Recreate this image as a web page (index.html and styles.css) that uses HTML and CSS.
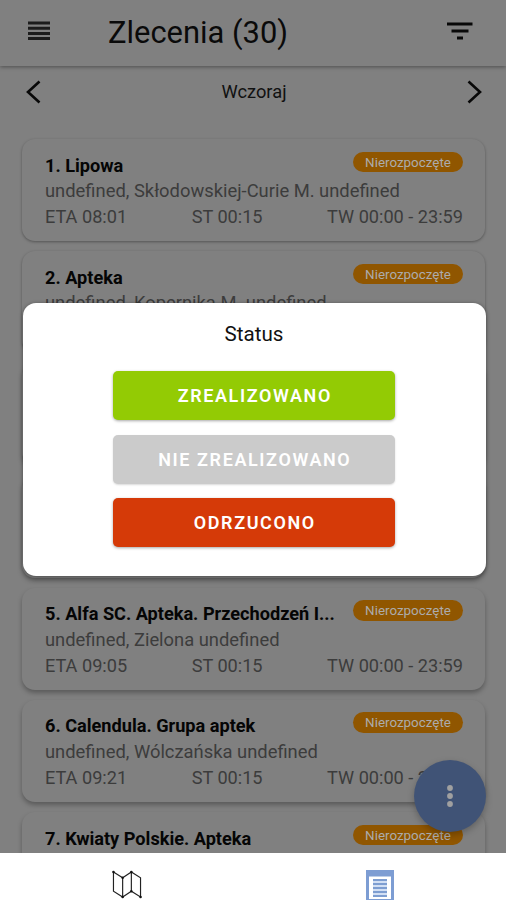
FILE: index.html
```html
<!DOCTYPE html>
<html lang="pl">
<head>
<meta charset="utf-8">
<title>Zlecenia</title>
<link rel="stylesheet" href="styles.css">
</head>
<body>
<div class="app">
  <header class="topbar">
    <svg class="menu-icon" viewBox="0 0 22 20"><path d="M0 2h22M0 7.200h22M0 12.400h22M0 17.600h22" stroke="#1c1c1c" stroke-width="3"/></svg>
    <h1 class="title">Zlecenia (30)</h1>
    <svg class="filter-icon" viewBox="0 0 26 18"><path d="M0 2h25.500M4.500 9.100h17M10 16h6" stroke="#080808" stroke-width="3"/></svg>
  </header>
  <nav class="day">
    <svg class="chevron" viewBox="0 0 15 24"><path d="M13.500 1.500 2 12l11.500 10.500" fill="none" stroke="#080808" stroke-width="2.600"/></svg>
    <span class="day-name">Wczoraj</span>
    <svg class="chevron" viewBox="0 0 15 24"><path d="M1.500 1.500 13 12 1.500 22.500" fill="none" stroke="#080808" stroke-width="2.600"/></svg>
  </nav>
  <main class="orders">
    <article class="card card-flat">
      <div class="head"><h2 class="name">1. Lipowa</h2><span class="badge">Nierozpoczęte</span></div>
      <p class="address">undefined, Skłodowskiej-Curie M. undefined</p>
      <div class="times"><span>ETA 08:01</span><span>ST 00:15</span><span>TW 00:00 - 23:59</span></div>
    </article>
    <article class="card card-flat">
      <div class="head"><h2 class="name">2. Apteka</h2><span class="badge">Nierozpoczęte</span></div>
      <p class="address">undefined, Kopernika M. undefined</p>
    </article>
    <article class="card"></article>
    <article class="card"></article>
    <article class="card">
      <div class="head"><h2 class="name">5. Alfa SC. Apteka. Przechodzeń I...</h2><span class="badge">Nierozpoczęte</span></div>
      <p class="address">undefined, Zielona undefined</p>
      <div class="times"><span>ETA 09:05</span><span>ST 00:15</span><span>TW 00:00 - 23:59</span></div>
    </article>
    <article class="card">
      <div class="head"><h2 class="name">6. Calendula. Grupa aptek</h2><span class="badge">Nierozpoczęte</span></div>
      <p class="address">undefined, Wólczańska undefined</p>
      <div class="times"><span>ETA 09:21</span><span>ST 00:15</span><span>TW 00:00 - 23:59</span></div>
    </article>
    <article class="card">
      <div class="head"><h2 class="name">7. Kwiaty Polskie. Apteka</h2><span class="badge">Nierozpoczęte</span></div>
    </article>
  </main>
  <footer class="tabs">
    <div class="tab"><svg class="map-icon" viewBox="0 0 30 30"><path d="M1 2 10.500 8 19.500 2 29 8V28L19.500 22 10.500 28 1 22ZM10.500 8V28M19.500 2V22" fill="none" stroke="#222" stroke-width="1.200"/><path d="M1 2h.01M10.500 28h.01M19.500 2h.01M29 28h.01M10.500 8h.01M19.500 22h.01" stroke="#111" stroke-width="2.600" stroke-linecap="round"/></svg></div>
    <div class="tab"><svg class="list-icon" viewBox="0 0 28 31"><path d="M0 0h28v31H0z" fill="#7d9dd3"/><path d="M3 6.500h22V29H3z" fill="#fff"/><path d="M7 9h14v18H7z" fill="#d3e0f4"/><path d="M7 10h14M7 14h14M7 18h14M7 22h14M7 26h14" stroke="#6388c5" stroke-width="1.500"/></svg></div>
  </footer>
  <button class="fab" aria-label="Menu"><svg viewBox="0 0 6 22"><circle cx="3" cy="3" r="2.900"/><circle cx="3" cy="11" r="2.900"/><circle cx="3" cy="19" r="2.900"/></svg></button>
  <section class="dialog">
    <h2 class="dialog-title">Status</h2>
    <button class="action done">ZREALIZOWANO</button>
    <button class="action undone">NIE ZREALIZOWANO</button>
    <button class="action rejected">ODRZUCONO</button>
  </section>
</div>
</body>
</html>
```
FILE: styles.css
```css
* { box-sizing: border-box; }
body { margin: 0; font-family: Roboto, sans-serif; background: #808080; }
h1, h2, p { margin: 0; }
button { border: 0; padding: 0; font-family: inherit; }
svg { display: block; flex: none; }
.app { position: relative; width: 506px; height: 900px; overflow: hidden; display: flex; flex-direction: column; }
.topbar { flex: none; height: 66px; display: flex; align-items: center; padding: 0 33px 4px 27.500px; box-shadow: 0 1px 4px rgba(0,0,0,.4); }
.menu-icon { width: 22px; height: 20px; margin-top: -1px; }
.title { flex: 1; margin-left: 58.500px; font-size: 30.900px; line-height: 40px; font-weight: 400; color: #0a0a0a; padding-top: 3px; }
.filter-icon { width: 26px; height: 18px; }
.day { flex: none; height: 69px; display: flex; justify-content: space-between; align-items: flex-start; padding: 14px 24px 0 26px; }
.chevron { width: 15px; height: 24px; }
.day-name { font-size: 18.300px; line-height: 23px; color: #111; }
.orders { flex: 1; min-height: 0; overflow: hidden; display: flex; flex-direction: column; gap: 10.2px; padding: 4px 21px 0 22px; }
.card { flex: none; height: 102px; border-radius: 13px; background: #808080; padding: 12.500px 22px 0 23px; box-shadow: 0 3px 5px rgba(0,0,0,.3); }
.card-flat { box-shadow: 0 1px 3px rgba(0,0,0,.35); }
.head { display: flex; justify-content: space-between; height: 26.500px; }
.name { font-size: 18.150px; line-height: 27.500px; font-weight: 700; color: #050505; white-space: nowrap; }
.badge { flex: none; width: 110px; height: 20.500px; border-radius: 11px; background: #905600; color: #acacac; font-size: 13.400px; line-height: 21px; text-align: center; }
.address, .times { font-size: 18.380px; line-height: 26px; color: #3c3c3c; white-space: nowrap; }
.times { font-size: 18.150px; display: flex; justify-content: space-between; }
.tabs { flex: none; height: 47px; display: grid; grid-template-columns: 1fr 1fr; justify-items: center; padding-top: 17px; background: #fff; }
.map-icon { width: 30px; height: 29px; }
.list-icon { width: 28px; height: 31px; }
.fab { position: absolute; left: 414px; top: 760px; width: 72px; height: 72px; border-radius: 50%; background: #405376; display: flex; align-items: center; justify-content: center; box-shadow: 0 3px 7px rgba(0,0,0,.25); }
.fab svg { width: 6px; height: 22px; fill: #a0a0a0; }
.dialog { position: absolute; left: 22.500px; top: 303px; width: 463px; height: 273px; border-radius: 13px; background: #fff; box-shadow: 0 1px 4px rgba(0,0,0,.45); display: flex; flex-direction: column; align-items: center; padding-top: 17px; }
.dialog-title { font-size: 20.600px; line-height: 28px; font-weight: 400; color: #111; margin-bottom: 23px; }
.action { width: 282px; height: 49px; margin-bottom: 14.500px; border-radius: 5px; color: #fff; font-size: 18px; font-weight: 600; letter-spacing: 1.600px; padding-left: 1.600px; box-shadow: 0 1px 3px rgba(0,0,0,.35); }
.done { background: #93cb04; }
.undone { background: #cbcbcb; box-shadow: 0 1px 2px rgba(0,0,0,.15); }
.rejected { background: #d53a08; }
```
